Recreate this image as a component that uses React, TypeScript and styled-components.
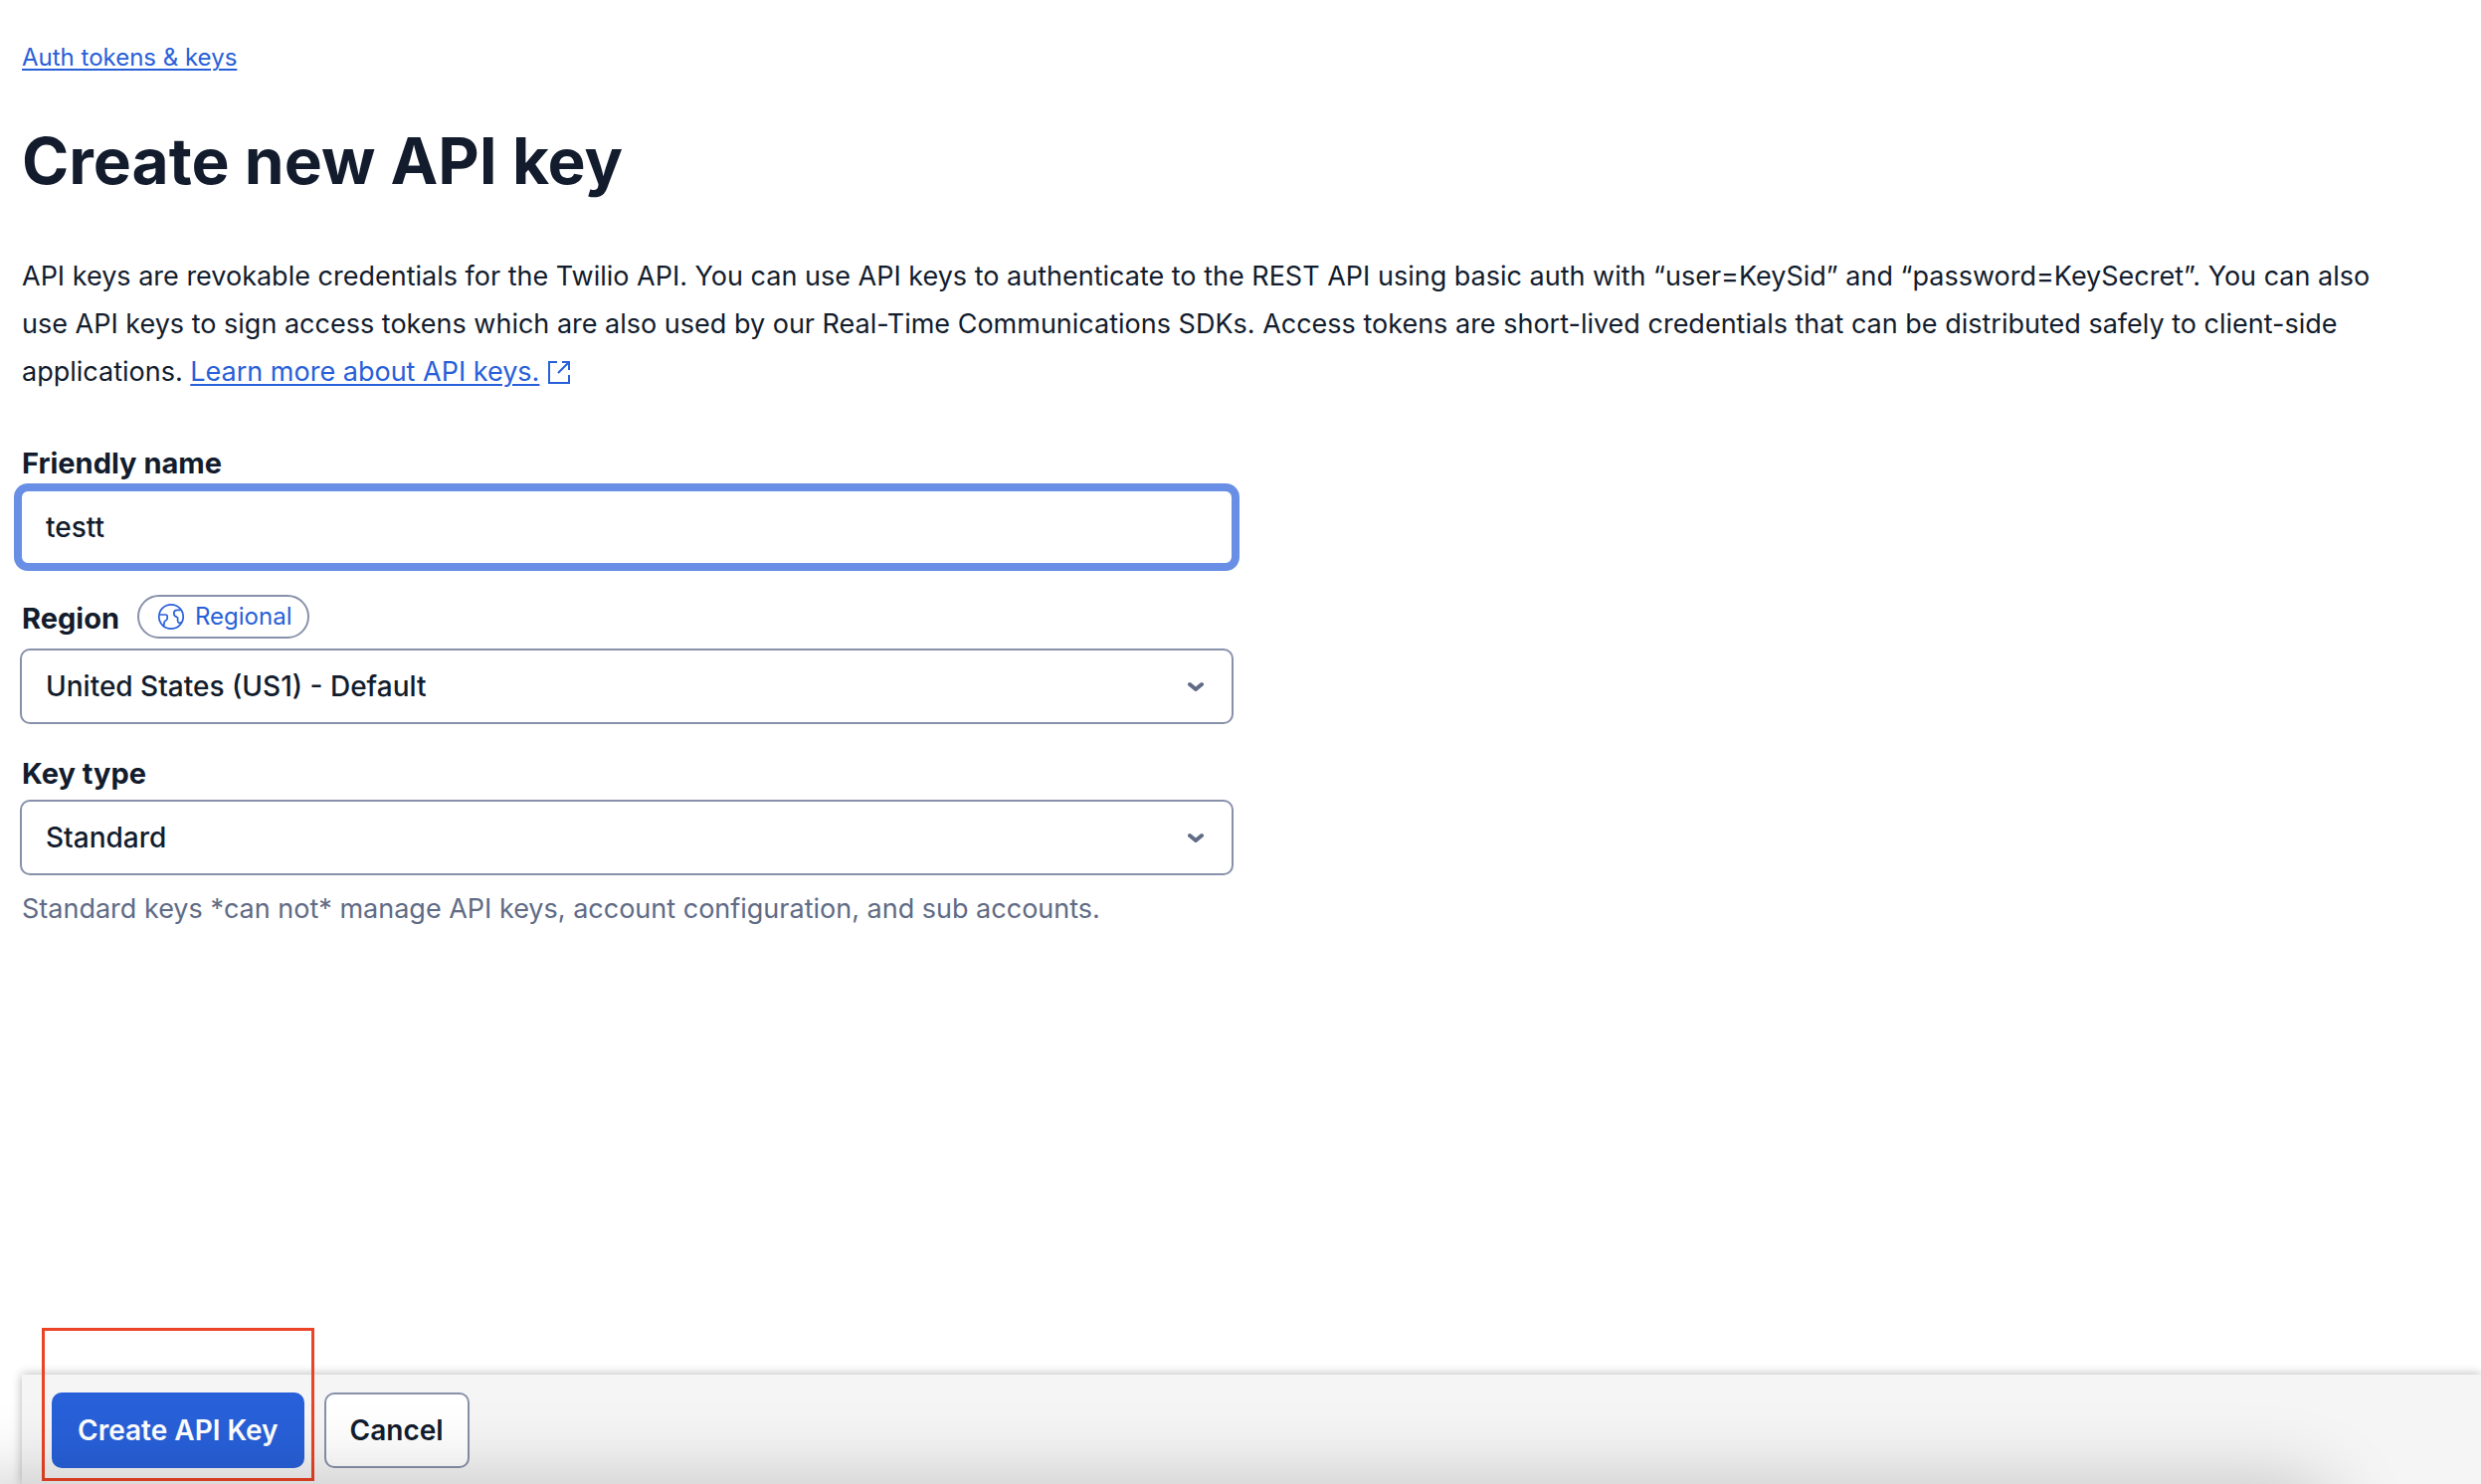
import React, { useState } from "react";
import styled, { createGlobalStyle } from "styled-components";

const color = {
  text: "#121c2d",
  weak: "#606b85",
  primary: "#2860d9",
  border: "#8891aa",
  focus: "#698ee5",
  bar: "#f5f5f5",
  mark: "#eb4325",
};

const GlobalStyle = createGlobalStyle`
  *, *::before, *::after { box-sizing: border-box; }
  body {
    margin: 0;
    background: #fff;
    color: ${color.text};
    font-family: Inter, "Liberation Sans", sans-serif;
    font-size: 28px;
    line-height: 48px;
  }
`;

const Page = styled.div`
  display: flex;
  flex-direction: column;
  min-height: 100vh;
  overflow: hidden;
`;

const Main = styled.main`
  flex: 1;
  padding: 40px 22px 0;
`;

const Link = styled.a`
  color: ${color.primary};
  text-decoration: underline;
  text-decoration-thickness: 2px;
  text-underline-offset: 3px;
`;

const Breadcrumb = styled.nav`
  font-size: 24px;
  line-height: 36px;
`;

const Title = styled.h1`
  margin: 42px 0 0;
  font-size: 64px;
  line-height: 88px;
  font-weight: 700;
`;

const Intro = styled.p`
  margin: 48px 0 0;
  padding-right: 60px;
  font-size: 27px;
`;

const ExternalIcon = styled.svg`
  width: 24px;
  height: 26px;
  margin-left: 8px;
  vertical-align: -4px;
  color: ${color.primary};
`;

const Form = styled.form`
  display: flex;
  flex-direction: column;
  gap: 24px;
  width: 50%;
  max-width: 1220px;
  margin: 42px 0 0 -2px;
`;

const Field = styled.div`
  display: flex;
  flex-direction: column;
`;

const LabelRow = styled.div`
  display: flex;
  align-items: center;
  gap: 18px;
  min-height: 52px;
  padding: 0 2px;
`;

const Label = styled.label`
  font-size: 29px;
  font-weight: 700;
  line-height: 44px;
`;

const Pill = styled.span`
  display: inline-flex;
  align-items: center;
  gap: 10px;
  height: 44px;
  margin: 6px 0 10px;
  padding: 0 16px 0 18px;
  border: 2px solid ${color.border};
  border-radius: 22px;
  color: ${color.primary};
  font-size: 24px;
  line-height: 40px;
`;

const TextInput = styled.input`
  width: 100%;
  height: 76px;
  padding: 0 24px;
  border: 2px solid ${color.focus};
  border-radius: 8px;
  box-shadow: 0 0 0 6px ${color.focus};
  outline: none;
  background: #fff;
  color: ${color.text};
  font: inherit;
  font-weight: 500;
`;

const SelectBox = styled.div`
  display: grid;
  align-items: center;

  > * { grid-area: 1 / 1; }

  svg {
    justify-self: end;
    margin-right: 30px;
    pointer-events: none;
    color: ${color.weak};
  }
`;

const Select = styled.select`
  appearance: none;
  width: 100%;
  height: 76px;
  padding: 0 64px 0 24px;
  border: 2px solid ${color.border};
  border-radius: 10px;
  background: #fff;
  color: ${color.text};
  font: inherit;
  font-weight: 500;
`;

const Help = styled.p`
  margin: 10px 2px 0;
  color: ${color.weak};
  font-size: 27px;
`;

const ActionBar = styled.footer`
  display: flex;
  align-items: flex-start;
  gap: 20px;
  height: 110px;
  margin-left: 22px;
  padding: 18px 30px 0;
  background: ${color.bar};
  box-shadow: 0 0 10px rgba(0, 0, 0, 0.3);
`;

const Button = styled.button<{ $primary?: boolean }>`
  height: 76px;
  padding: 0 24px;
  border: 2px solid ${(p) => (p.$primary ? color.primary : color.border)};
  border-radius: 10px;
  background: ${(p) => (p.$primary ? color.primary : "#fff")};
  color: ${(p) => (p.$primary ? "#fff" : color.text)};
  font: inherit;
  font-weight: 600;
`;

const Marked = styled.div`
  position: relative;
  display: flex;

  &::after {
    content: "";
    position: absolute;
    inset: -65px -10px -13px;
    border: 3px solid ${color.mark};
    pointer-events: none;
  }
`;

const BottomShade = styled.div`
  position: fixed;
  left: -60px;
  right: 150px;
  top: 100vh;
  height: 200px;
  border-radius: 40px;
  box-shadow: 0 0 80px rgba(0, 0, 0, 0.22);
  pointer-events: none;
`;

const Chevron = () => (
  <svg width="16" height="12" viewBox="1 0 16 12" fill="none" stroke="currentColor" strokeWidth="4" strokeLinecap="round" strokeLinejoin="round" aria-hidden="true">
    <path d="M3 4l6 5 6-5" />
  </svg>
);

const Globe = () => (
  <svg width="28" height="28" viewBox="0 0 28 28" fill="none" stroke="currentColor" strokeWidth="1.7" strokeLinejoin="round" aria-hidden="true">
    <circle cx="14" cy="14" r="12.2" />
    <path d="M2.2 12h6.300c1 0 1.700.7 1.700 1.700v1.800c0 .8-.3 1.300-.9 1.800-.9.800-1.900 1.200-2.100 2.200-.3 1.700-.1 3.500-1.200 4.600" />
    <path d="M23.500 7.300h-3.300c-2 0-3.400 1.300-3.400 3.200 0 2 1 3.300 2.800 3.700.8.2 1 .6 1 1.300v2.400c0 .9.500 1.900 1.300 2.300.7.300 1.600.1 2.200-.5" />
  </svg>
);

export default function App() {
  const [name, setName] = useState("testt");
  return (
    <>
      <GlobalStyle />
      <Page>
        <Main>
          <Breadcrumb aria-label="Breadcrumb">
            <Link href="#tokens">Auth tokens &amp; keys</Link>
          </Breadcrumb>
          <Title>Create new API key</Title>
          <Intro>
            API keys are revokable credentials for the Twilio API. You can use API keys to authenticate to the REST API
            using basic auth with “user=KeySid” and “password=KeySecret”. You can also use API keys to sign access
            tokens which are also used by our Real-Time Communications SDKs. Access tokens are short-lived credentials
            that can be distributed safely to client-side applications.{" "}
            <Link href="#learn">Learn more about API keys.</Link>
            <ExternalIcon viewBox="0 0 24 26" fill="none" stroke="currentColor" strokeWidth="2" aria-hidden="true">
              <path d="M10 3H2v21h20v-8M15 3h7v8M22 3L11 14" />
            </ExternalIcon>
          </Intro>
          <Form onSubmit={(e) => e.preventDefault()} id="key-form">
            <Field>
              <LabelRow>
                <Label htmlFor="name">Friendly name</Label>
              </LabelRow>
              <TextInput id="name" value={name} onChange={(e) => setName(e.target.value)} />
            </Field>
            <Field>
              <LabelRow>
                <Label htmlFor="region">Region</Label>
                <Pill>
                  <Globe />
                  Regional
                </Pill>
              </LabelRow>
              <SelectBox>
                <Select id="region">
                  <option>United States (US1) - Default</option>
                </Select>
                <Chevron />
              </SelectBox>
            </Field>
            <Field>
              <LabelRow>
                <Label htmlFor="type">Key type</Label>
              </LabelRow>
              <SelectBox>
                <Select id="type">
                  <option>Standard</option>
                </Select>
                <Chevron />
              </SelectBox>
              <Help>Standard keys *can not* manage API keys, account configuration, and sub accounts.</Help>
            </Field>
          </Form>
        </Main>
        <ActionBar>
          <Marked>
            <Button $primary type="submit" form="key-form">
              Create API Key
            </Button>
          </Marked>
          <Button type="button">Cancel</Button>
        </ActionBar>
      </Page>
      <BottomShade />
    </>
  );
}
